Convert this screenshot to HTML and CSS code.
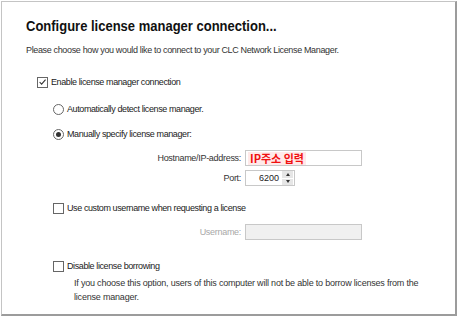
FILE: index.html
```html
<!DOCTYPE html>
<html>
<head>
  <title>Configure license manager connection</title>
  <link rel="stylesheet" href="styles.css">
</head>
<body>
  <div class="frame">
    <h1 class="title">Configure license manager connection...</h1>
    <p class="subtitle">Please choose how you would like to connect to your CLC Network License Manager.</p>

    <div class="options">
      <label class="row top-check">
        <span class="box checked">
          <svg width="10" height="10" viewBox="0 0 10 10"><polyline points="1.8,5 4,7.4 8.4,2.4" fill="none" stroke="#333" stroke-width="1.2"/></svg>
        </span>
        Enable license manager connection
      </label>

      <div class="indent">
        <label class="row auto-row">
          <span class="radio"></span>
          Automatically detect license manager.
        </label>
        <label class="row manual-row">
          <span class="radio on"><span class="dot"></span></span>
          Manually specify license manager:
        </label>

        <div class="fields">
          <div class="field">
            <span class="lbl">Hostname/IP-address:</span>
            <span class="input wide"><span class="hint">IP주소 입력</span></span>
          </div>
          <div class="field">
            <span class="lbl">Port:</span>
            <span class="spin">
              <span class="num">6200</span>
              <span class="arrows">
                <span class="arr up"></span>
                <span class="arr down"></span>
              </span>
            </span>
          </div>
        </div>

        <label class="row user-row">
          <span class="box"></span>
          Use custom username when requesting a license
        </label>
        <div class="fields">
          <div class="field">
            <span class="lbl disabled">Username:</span>
            <span class="input wide off"></span>
          </div>
        </div>

        <label class="row borrow-row">
          <span class="box"></span>
          Disable license borrowing
        </label>
        <p class="note">If you choose this option, users of this computer will not be able to borrow licenses from the license manager.</p>
      </div>
    </div>
  </div>
</body>
</html>
```

FILE: styles.css
```css
* {
  box-sizing: border-box;
}
body {
  margin: 0;
  background: #fff;
  font-family: "Liberation Sans", Arial, sans-serif;
  color: #222;
}
.frame {
  margin: 1px 0 0 1px;
  width: 456px;
  height: 315px;
  border-left: 1px solid #c4c4c4;
  border-top: 1px solid #c4c4c4;
  border-right: 2px solid #9c9c9c;
  border-bottom: 2px solid #9c9c9c;
  padding: 17px 0 0 24px;
}
.title {
  margin: 0;
  font-size: 13px;
  font-weight: bold;
  color: #111;
  line-height: 18px;
  transform: scaleY(1.1);
  transform-origin: left bottom;
}
.subtitle {
  margin: 7px 0 0;
  font-size: 9px;
  letter-spacing: -0.35px;
  line-height: 12px;
  color: #333;
}
.options {
  padding: 20px 0 0 11px;
}
.row {
  display: flex;
  align-items: center;
  gap: 3px;
  font-size: 9px;
  letter-spacing: -0.4px;
  line-height: 12px;
  height: 12px;
}
.box {
  width: 11px;
  height: 11px;
  border: 1px solid #666;
  background: #fff;
  display: flex;
  align-items: center;
  justify-content: center;
}
.radio {
  width: 11px;
  height: 11px;
  border: 1px solid #666;
  border-radius: 50%;
  display: flex;
  align-items: center;
  justify-content: center;
}
.dot {
  width: 5px;
  height: 5px;
  border-radius: 50%;
  background: #333;
}
.indent {
  padding-left: 16px;
}
.auto-row {
  margin-top: 15px;
}
.manual-row {
  margin-top: 13px;
}
.fields {
  display: flex;
  flex-direction: column;
  gap: 4px;
  margin-top: 10px;
}
.field {
  display: flex;
  align-items: center;
  gap: 4px;
}
.lbl {
  width: 188px;
  text-align: right;
  font-size: 9px;
  letter-spacing: -0.3px;
  color: #333;
}
.lbl.disabled {
  color: #a8a8a8;
}
.input {
  height: 16px;
  border: 1px solid #c8c8c8;
  background: #fff;
  display: flex;
  align-items: center;
  padding-left: 2px;
}
.input.wide {
  width: 117px;
}
.input.off {
  background: #f0f0f0;
}
.hint {
  color: #f01010;
  font-weight: bold;
  font-size: 11px;
  font-family: "Noto Sans CJK KR", sans-serif;
  background: #ffe9e9;
  padding: 0 2px;
  line-height: 13px;
}
.spin {
  width: 50px;
  height: 16px;
  border: 1px solid #c8c8c8;
  display: flex;
  align-items: center;
  font-size: 9px;
}
.num {
  flex: 1;
  text-align: right;
  padding-right: 3px;
}
.arrows {
  width: 11px;
  height: 14px;
  display: flex;
  flex-direction: column;
  gap: 1px;
  margin-right: 1px;
}
.arr {
  flex: 1;
  background: #e6e6e6;
  display: flex;
  align-items: center;
  justify-content: center;
}
.arr::after {
  content: "";
  border-left: 2.5px solid transparent;
  border-right: 2.5px solid transparent;
}
.up::after {
  border-bottom: 3px solid #333;
}
.down::after {
  border-top: 3px solid #333;
}
.user-row {
  margin-top: 16px;
}
.user-row + .fields {
  margin-top: 10px;
}
.borrow-row {
  margin-top: 20px;
}
.note {
  margin: 4px 0 0 21px;
  font-size: 9px;
  letter-spacing: -0.2px;
  line-height: 14px;
  width: 352px;
  color: #333;
}
```
